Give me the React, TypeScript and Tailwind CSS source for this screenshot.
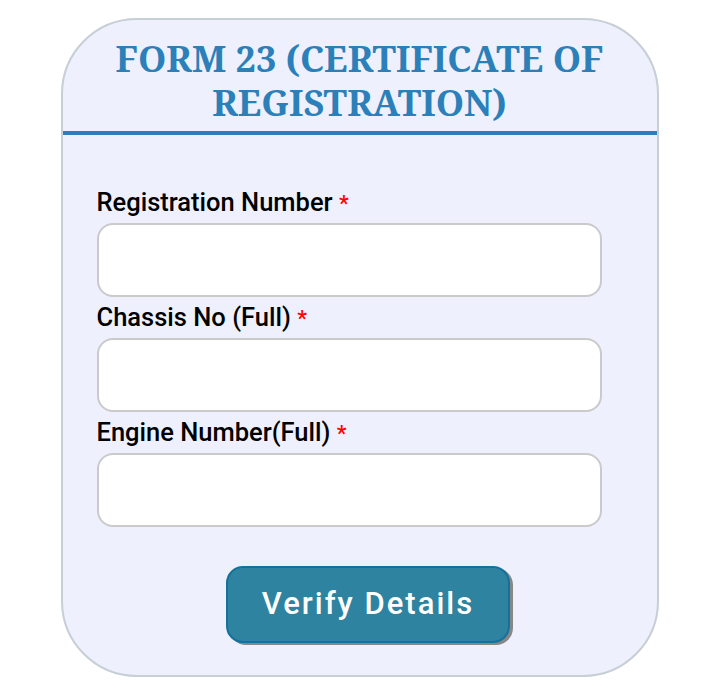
import React from 'react'

const fields = ['Registration Number', 'Chassis No (Full)', 'Engine Number(Full)']

export default function App() {
  return (
    <div className="flex justify-center bg-white pt-[18px] pb-[18px]" style={{ fontFamily: 'Roboto, "Liberation Sans", sans-serif' }}>
      <div className="w-[598px] h-[659px] border-2 border-[#c6ced6] rounded-[76px] bg-[#eef0fd] overflow-hidden">
        <h1
          className="pt-[17px] pb-[6px] text-center text-[36px] leading-[44px] font-bold text-[#2b80b9]"
          style={{ fontFamily: '"Noto Serif", "DejaVu Serif", "Liberation Serif", serif' }}
        >
          FORM 23 (CERTIFICATE OF
          <br />
          REGISTRATION)
        </h1>
        <div className="h-[4px] bg-[#2a80b9]" />
        <form className="pl-[34px] pt-[47px]" onSubmit={(e) => e.preventDefault()}>
          {fields.map((label) => (
            <div key={label} className="flex flex-col pt-[3px]">
              <label className="h-[34px] text-[25.5px] leading-[34px] font-medium text-black">
                {label} <span className="text-[#ff0000] text-[22px] leading-none">*</span>
              </label>
              <input
                type="text"
                className="mt-[4px] w-[505px] h-[74px] rounded-[16px] border-2 border-[#cacaca] bg-white outline-none px-3"
              />
            </div>
          ))}
          <div className="flex justify-center w-[543px] pt-[39px]">
            <button
              type="submit"
              className="w-[284px] h-[77px] rounded-[17px] border-2 border-[#14729a] bg-[#2e83a0] text-white text-[31px] font-medium tracking-[2px] shadow-[3px_2px_0_#878787]"
            >
              Verify Details
            </button>
          </div>
        </form>
      </div>
    </div>
  )
}
